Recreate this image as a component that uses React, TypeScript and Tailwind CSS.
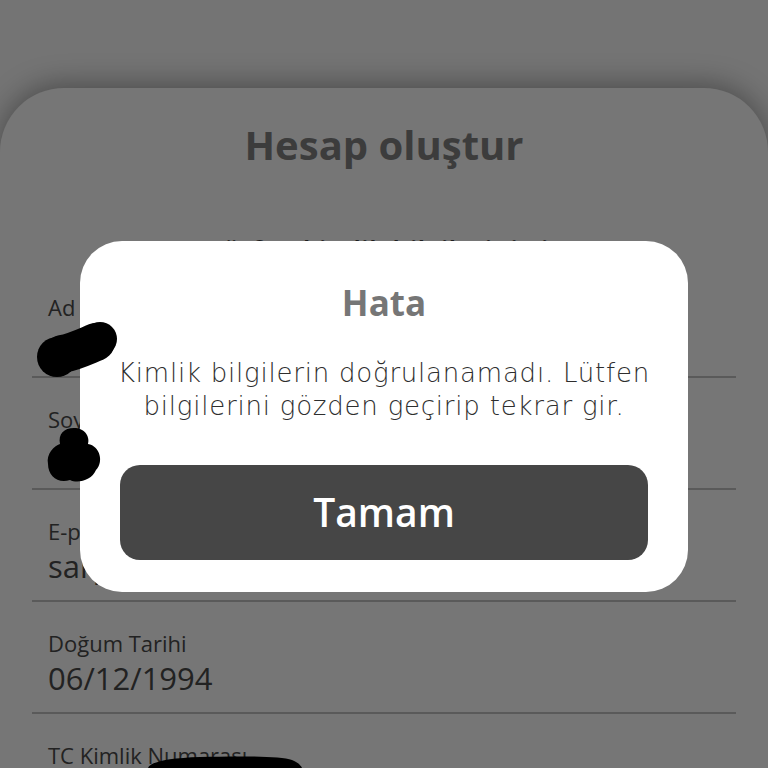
import React from 'react';

const fields = [
  { label: 'Ad', value: '' },
  { label: 'Soyad', value: '' },
  { label: 'E-posta', value: 'sarp' },
  { label: 'Doğum Tarihi', value: '06/12/1994' },
  { label: 'TC Kimlik Numarası', value: '' },
];

const App: React.FC = () => {
  return (
    <div
      className="relative h-[768px] w-[768px] overflow-hidden bg-[#747474]"
      style={{ fontFamily: '"Open Sans", "Noto Sans", sans-serif' }}
    >
      {/* Background form card */}
      <div className="mt-[88px] h-[700px] rounded-t-[64px] bg-[#767676] px-8 shadow-[0_-4px_28px_rgba(0,0,0,0.35)]">
        <h1 className="pt-[34px] text-center text-[40px] font-bold leading-[46px] text-[#3c3c3c]">
          Hesap oluştur
        </h1>
        <p className="mt-[67px] text-center text-[28px] font-semibold leading-[32px] text-[#1e1e1e]">
          Lütfen kimlik bilgilerini gir
        </p>
        <div className="-mt-[1px]">
          {fields.map((f) => (
            <div key={f.label} className="h-[112px] border-b-[2px] border-[#5a5a5a] px-4 pt-[27px]">
              <div className="text-[22px] leading-[28px] text-[#222]">{f.label}</div>
              <div className="mt-[2px] text-[31px] leading-[38px] text-[#222]">{f.value}</div>
            </div>
          ))}
        </div>
      </div>

      {/* Error dialog */}
      <div className="absolute left-[80px] top-[241px] flex h-[351px] w-[608px] flex-col items-center rounded-[42px] bg-white px-8">
        <h2 className="mt-[40px] text-[35px] font-bold leading-[44px] text-[#767676]">Hata</h2>
        <p
          className="mt-[32px] text-center text-[26px] font-extralight leading-[33px] tracking-[0.03em] text-[#2e2e2e]"
          style={{ fontFamily: '"DejaVu Sans", sans-serif' }}
        >
          Kimlik bilgilerin doğrulanamadı. Lütfen bilgilerini gözden geçirip tekrar gir.
        </p>
        <button className="mt-[42px] flex h-[95px] w-[528px] shrink-0 items-center justify-center rounded-[20px] bg-[#464646] text-[39px] font-semibold text-white">
          Tamam
        </button>
      </div>

      {/* Redaction scribbles drawn over the screenshot */}
      <svg className="absolute left-0 top-0" width="768" height="768" viewBox="0 0 768 768">
        <circle cx="57" cy="357" r="20" fill="#000" />
        <circle cx="100" cy="339" r="17" fill="#000" />
        <path d="M62 354 C74 352 86 346 96 342" stroke="#000" strokeWidth="38" strokeLinecap="round" fill="none" />
        <path
          d="M74 428 C86 428 90 438 88 444 C100 446 104 462 96 470 C92 480 78 484 70 480 C58 484 48 476 48 464 C46 454 54 446 60 444 C58 434 64 428 74 428 Z"
          fill="#000"
        />
        <path d="M148 768 C150 762 168 758 200 757 C240 756 280 756 292 760 C300 763 302 768 302 768 Z" fill="#000" />
      </svg>
    </div>
  );
};

export default App;
